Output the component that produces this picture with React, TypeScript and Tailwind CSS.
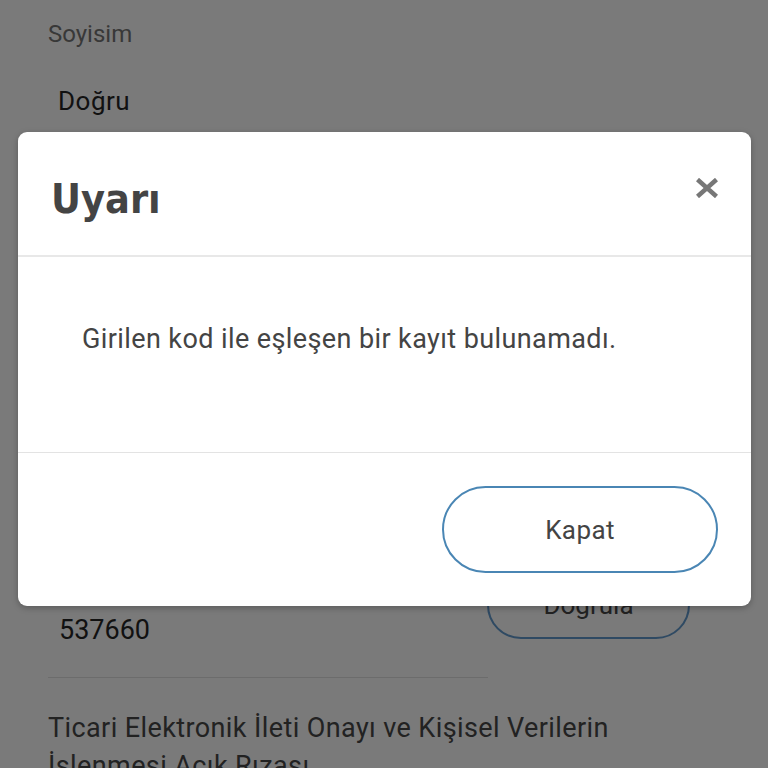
const FONT = { fontFamily: "Roboto, 'Noto Sans', sans-serif" };

export default function App() {
  return (
    <div className="relative h-[768px] w-[768px] overflow-hidden bg-[#7a7a7a]" style={FONT}>
      {/* Page behind the overlay */}
      <div className="flex flex-col">
        <div className="pl-[48px] pt-[20px] text-[24px] leading-[28px] text-[#383838]">Soyisim</div>
        <div className="pl-[58px] pt-[37px] text-[26px] leading-[32px] tracking-[0.5px] text-[#111]">Doğru</div>

        <div className="mt-[450px] flex h-[72px] items-start">
          <div className="w-[487px] pl-[59px] pt-[47px] text-[27px] leading-[32px] text-[#111]">537660</div>
          <div className="flex h-[72px] w-[203px] items-center justify-center rounded-[34px] border-2 border-[#2f4a63] pt-[4px] text-[26px] text-[#222]">
            Doğrula
          </div>
        </div>

        <div className="ml-[48px] mt-[38px] h-px w-[440px] bg-[#6c6c6c]" />

        <div className="pl-[48px] pt-[31px] text-[27px] leading-[38px] tracking-[0.4px] text-[#222]">
          Ticari Elektronik İleti Onayı ve Kişisel Verilerin
          <br />
          İşlenmesi Açık Rızası
        </div>
      </div>

      {/* Alert dialog */}
      <div className="absolute left-[18px] top-[132px] flex h-[474px] w-[733px] flex-col rounded-[9px] bg-white shadow-[0_2px_6px_rgba(0,0,0,0.25)]">
        <div className="flex h-[125px] items-start justify-between border-b-2 border-[#e8e8e8] pl-[33px] pr-[33px]">
          <h2
            className="mt-[43px] text-[41px] font-bold leading-[48px] text-[#444]"
            style={{ fontFamily: "'DejaVu Sans Condensed', 'DejaVu Sans', sans-serif", fontStretch: "condensed" }}
          >
            Uyarı
          </h2>
          <button className="mt-[46px]" aria-label="Kapat">
            <svg width="22" height="20" viewBox="0 0 22 20">
              <path d="M1.5 1.5L20.5 18.5M20.5 1.5L1.5 18.5" stroke="#777" strokeWidth="4.5" fill="none" />
            </svg>
          </button>
        </div>

        <div className="h-[196px] border-b border-[#e3e3e3] pl-[64px] pt-[66px] text-[27px] leading-[32px] tracking-[0.4px] text-[#444]">
          Girilen kod ile eşleşen bir kayıt bulunamadı.
        </div>

        <div className="flex flex-1 justify-end pr-[33px] pt-[33px]">
          <button className="flex h-[87px] w-[276px] items-center justify-center rounded-full border-2 border-[#4a86b4] pt-[2px] text-[26px] tracking-[0.4px] text-[#444]">
            Kapat
          </button>
        </div>
      </div>
    </div>
  );
}
